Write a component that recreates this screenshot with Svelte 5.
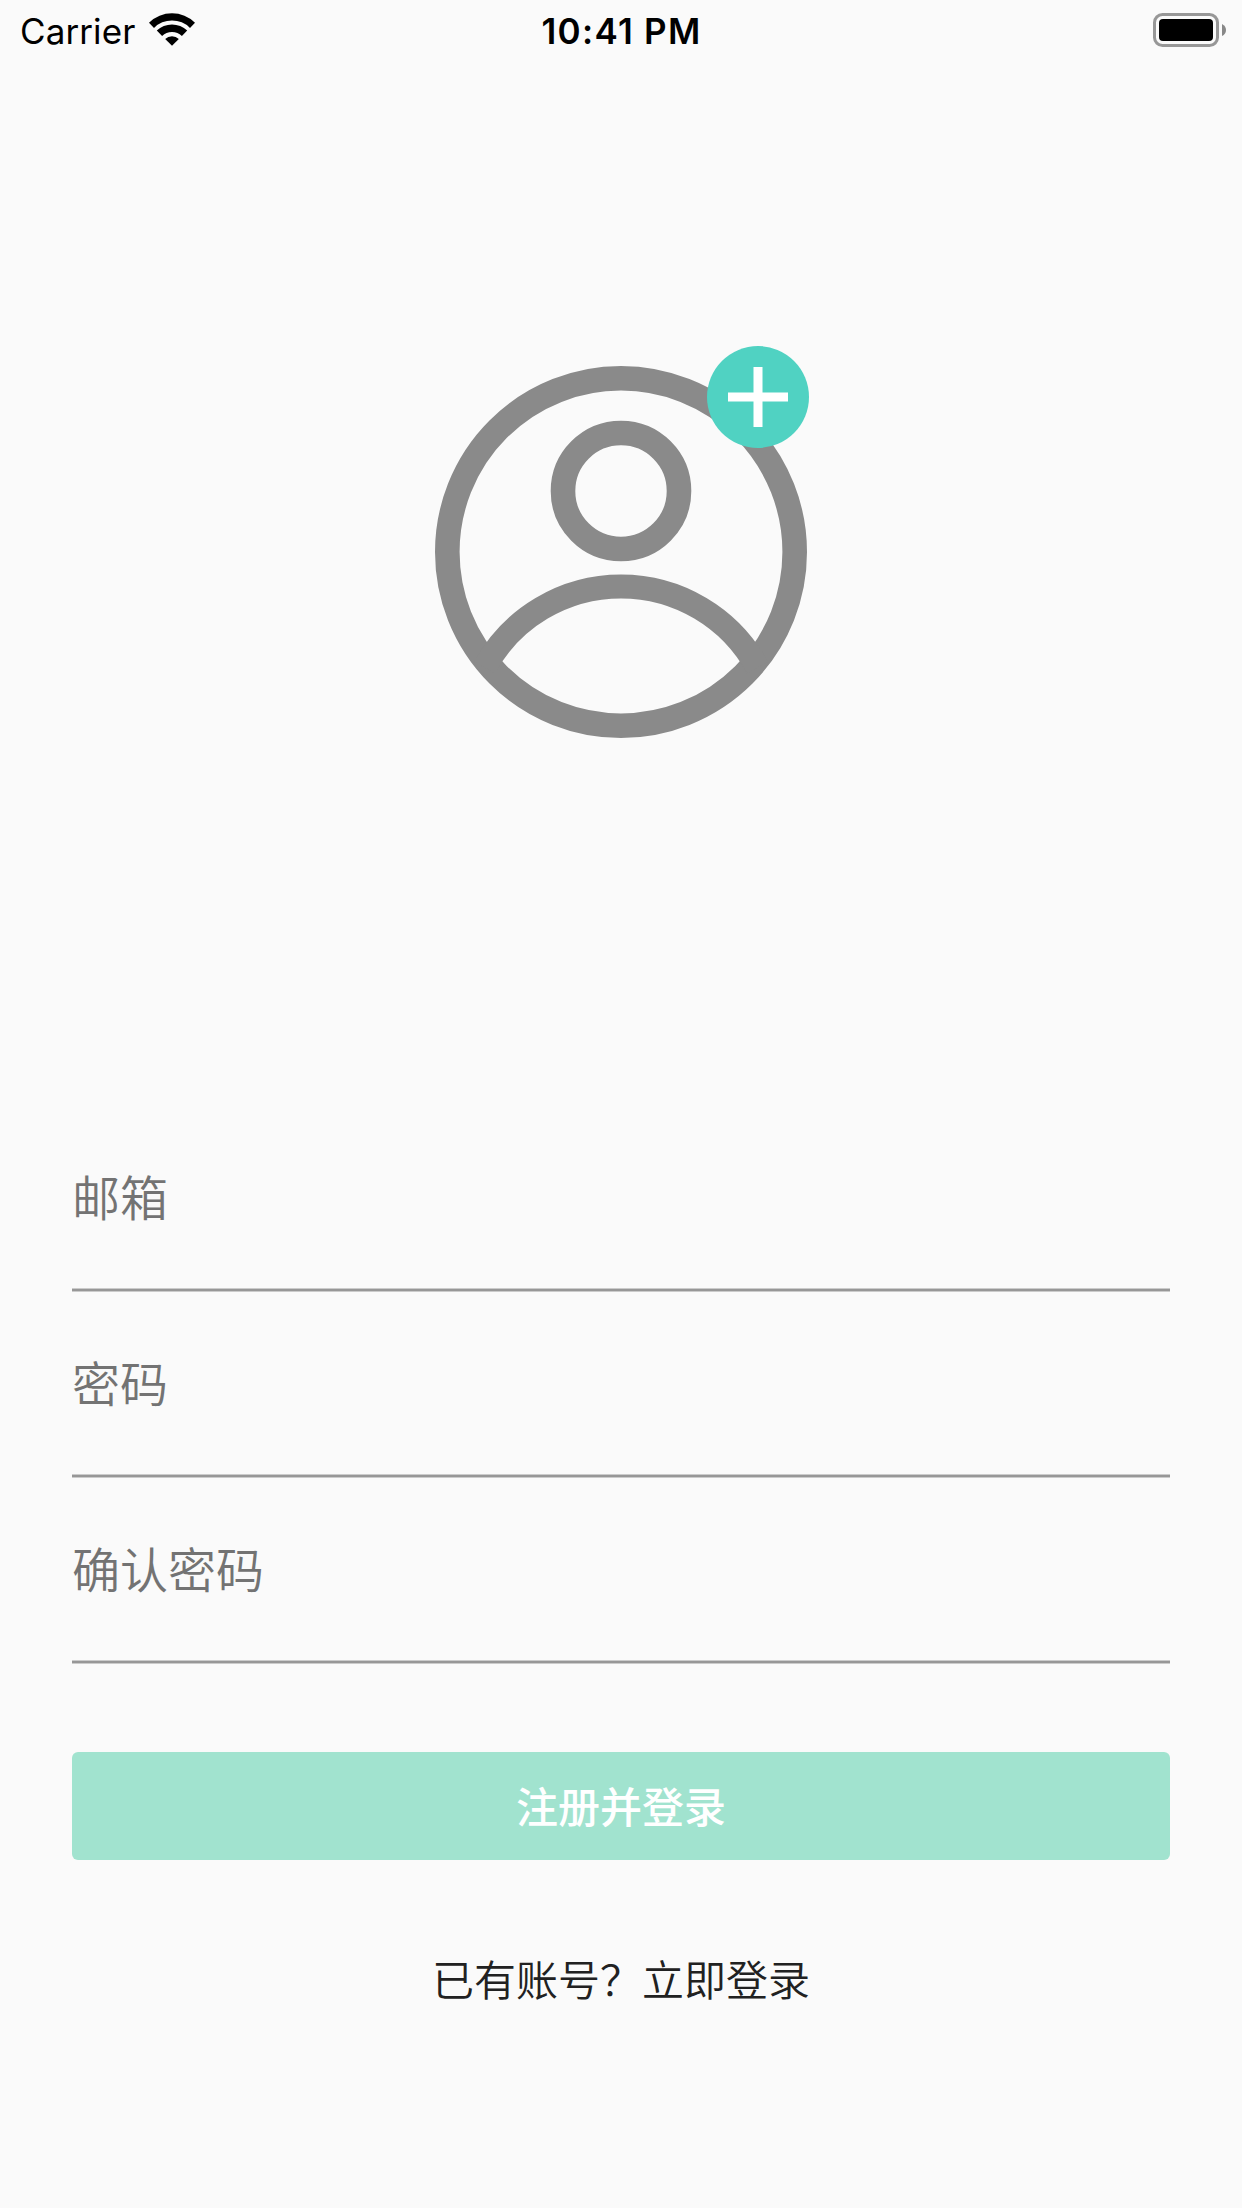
<script>
    const fields = ["邮箱", "密码", "确认密码"];
</script>

<div class="screen">
    <header class="status">
        <div class="carrier">
            <span class="name">Carrier</span>
            <svg class="wifi" width="48" height="36" viewBox="0 0 48 36">
                <path d="M1 10.7 A33 33 0 0 1 47 10.7 L42 15.9 A25.3 25.3 0 0 0 6 15.9 Z" />
                <path d="M8.8 18.6 A21.9 21.9 0 0 1 39.2 18.6 L33.9 24.1 A13.9 13.9 0 0 0 14.1 24.1 Z" />
                <path d="M17.2 26.9 A10 10 0 0 1 30.8 26.9 L24 33.8 Z" />
            </svg>
        </div>
        <div class="time">10:41 PM</div>
        <svg class="battery" width="74" height="34" viewBox="0 0 74 34">
            <rect x="1.5" y="1.5" width="63" height="31" rx="8" fill="none" stroke="#979797" stroke-width="3" />
            <rect x="6" y="6" width="54" height="22" rx="4" />
            <path d="M69 11 Q73 13 73 17 Q73 21 69 23 Z" fill="#888" />
        </svg>
    </header>

    <div class="avatar">
        <svg width="372" height="372" viewBox="0 0 372 372" fill="none" stroke="#8a8a8a" stroke-width="24.6">
            <circle cx="186" cy="186" r="173.7" />
            <circle cx="186" cy="125" r="58" />
            <path d="M49.5 301.5 A155.5 155.5 0 0 1 322.5 301.5" stroke-width="24" />
        </svg>
        <div class="add">
            <svg width="60" height="60" viewBox="0 0 60 60">
                <path d="M25.5 0h9v25.5H60v9H34.5V60h-9V34.5H0v-9h25.5z" fill="#fff" />
            </svg>
        </div>
    </div>

    <form class="form">
        {#each fields as field}
            <div class="field">{field}</div>
        {/each}
        <button type="button">注册并登录</button>
    </form>

    <div class="login">已有账号？立即登录</div>
</div>

<style>
    :global(body) {
        background: #fafafa;
    }

    .screen {
        box-sizing: border-box;
        width: 1242px;
        height: 2208px;
        overflow: hidden;
        background: #fafafa;
        font-family: "Noto Sans CJK SC", sans-serif;
    }

    .status {
        display: grid;
        grid-template-columns: 1fr auto 1fr;
        align-items: center;
        height: 60px;
        padding: 0 15px 0 20px;
        font-family: Inter, sans-serif;
        font-size: 35px;
        line-height: 57px;
        color: #000;
    }

    .carrier {
        display: flex;
        align-items: center;
    }

    .name {
        width: 128px;
        padding-top: 3px;
        letter-spacing: 0.1px;
    }

    .time {
        padding: 3px 4px 0 0;
        font-weight: 580;
        letter-spacing: 1.3px;
    }

    .battery {
        justify-self: end;
    }

    .avatar {
        position: relative;
        width: 372px;
        height: 372px;
        margin: 306px auto 0;
    }

    .avatar > svg {
        display: block;
    }

    .add {
        position: absolute;
        top: -20px;
        right: -2.3px;
        display: flex;
        align-items: center;
        justify-content: center;
        width: 102px;
        height: 102px;
        border-radius: 50%;
        background: #50d2c2;
    }

    .form {
        margin: 368px 72px 0;
    }

    .field {
        box-sizing: border-box;
        height: 186px;
        padding-top: 53px;
        /* hairline with softened edges */
        background: linear-gradient(#cbcbcb 1px, #979797 1px, #979797 3px, #cbcbcb 3px) bottom / 100% 4px no-repeat;
        font-size: 48px;
        font-weight: 350;
        line-height: 72px;
        color: #737373;
    }

    button {
        display: block;
        width: 100%;
        height: 108px;
        margin-top: 88px;
        padding: 0 0 2px;
        border: 0;
        border-radius: 6px;
        background: #a1e3cf;
        font-family: inherit;
        font-size: 42px;
        font-weight: 500;
        line-height: 106px;
        color: #fff;
    }

    .login {
        margin-top: 88px;
        font-size: 42px;
        font-weight: 350;
        line-height: 60px;
        text-align: center;
        color: #212121;
    }
</style>
